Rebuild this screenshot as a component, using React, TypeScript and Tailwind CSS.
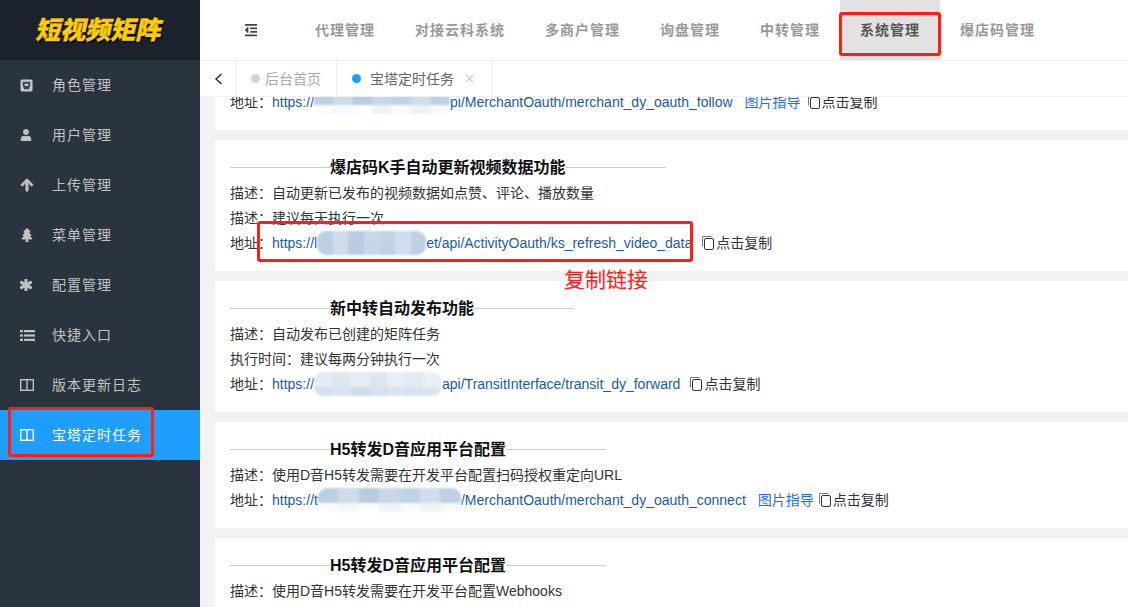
import { FaUser, FaArrowUp, FaTree, FaAsterisk, FaOutdent } from "react-icons/fa";
import type { ReactNode } from "react";

function RoleIcon() {
  return (
    <svg viewBox="0 0 14 14" className="h-[13px] w-[13px]">
      <rect x="0.5" y="0.5" width="13" height="13" rx="2" fill="#c8c8c8" />
      <path d="M3 3h8v4l-1.5 4h-5L3 7z" fill="#39424d" />
      <rect x="5" y="5" width="4" height="2.5" fill="#c8c8c8" />
    </svg>
  );
}

function ColumnsIcon() {
  return (
    <svg viewBox="0 0 14 12" className="h-3 w-[14px]" fill="none" stroke="currentColor" strokeWidth="1.4">
      <rect x="0.7" y="0.7" width="12.6" height="10.6" />
      <path d="M7 1v10" />
    </svg>
  );
}

function ListIcon() {
  return (
    <svg viewBox="0 0 15 11" className="h-[11px] w-[15px]" fill="currentColor">
      <rect x="0" y="0" width="3" height="2.2" />
      <rect x="4" y="0" width="11" height="2.2" />
      <rect x="0" y="4.4" width="3" height="2.2" />
      <rect x="4" y="4.4" width="11" height="2.2" />
      <rect x="0" y="8.8" width="3" height="2.2" />
      <rect x="4" y="8.8" width="11" height="2.2" />
    </svg>
  );
}

const menu: { icon: ReactNode; label: string; active?: boolean }[] = [
  { icon: <RoleIcon />, label: "角色管理" },
  { icon: <FaUser size={12} />, label: "用户管理" },
  { icon: <FaArrowUp size={14} stroke="currentColor" strokeWidth={30} />, label: "上传管理" },
  { icon: <FaTree size={14} />, label: "菜单管理" },
  { icon: <FaAsterisk size={12} stroke="currentColor" strokeWidth={50} />, label: "配置管理" },
  { icon: <ListIcon />, label: "快捷入口" },
  { icon: <ColumnsIcon />, label: "版本更新日志" },
  { icon: <ColumnsIcon />, label: "宝塔定时任务", active: true },
];

const navItems = ["代理管理", "对接云科系统", "多商户管理", "询盘管理", "中转管理", "系统管理", "爆店码管理"];

function Sidebar() {
  return (
    <aside className="flex h-full w-[200px] shrink-0 flex-col bg-[#2a343f]">
      <div className="flex h-[60px] items-center justify-center bg-[#1b222b]">
        <span className="-skew-x-12 text-[25px] leading-none font-black text-[#ffcc00] [-webkit-text-stroke:0.4px_#ffcc00] [text-shadow:2px_2px_0_#000]">
          短视频矩阵
        </span>
      </div>
      {menu.map((item) => (
        <div
          key={item.label}
          className={
            item.active
              ? "flex h-[50px] items-center bg-[#1e9fff] pl-5 text-white"
              : "flex h-[50px] items-center pl-5 text-[#c2c2c2]"
          }
        >
          <span className="flex w-8 items-center">{item.icon}</span>
          <span className="text-sm tracking-[1px]">{item.label}</span>
        </div>
      ))}
    </aside>
  );
}

function TopNav() {
  return (
    <div className="flex h-[61px] shrink-0 items-stretch border-b border-[#f0f0f0] bg-white">
      <div className="flex w-[95px] items-center pl-11 text-[#444]">
        <FaOutdent size={14} />
      </div>
      {navItems.map((name) => (
        <div
          key={name}
          className={
            name === "系统管理"
              ? "flex items-center bg-[#e2e2e2] px-5 text-sm font-semibold tracking-[1px] text-[#555]"
              : "flex items-center px-5 text-sm font-semibold tracking-[1px] text-[#999]"
          }
        >
          {name}
        </div>
      ))}
    </div>
  );
}

function TabBar() {
  return (
    <div className="flex h-9 shrink-0 items-stretch border-b border-[#f0f0f0] bg-white text-sm">
      <div className="flex w-[37px] items-center justify-center border-r border-[#f0f0f0]">
        <svg viewBox="0 0 9 12" className="h-3 w-[9px]" fill="none" stroke="#222" strokeWidth="1.4">
          <path d="M7.5 1 2 6l5.5 5" />
        </svg>
      </div>
      <div className="flex w-[100px] items-center gap-[5px] border-r border-[#f0f0f0] pl-[14px] text-[#aaa]">
        <span className="h-[9px] w-[9px] rounded-full bg-[#d2d2d2]" />
        后台首页
      </div>
      <div className="flex w-[155px] items-center border-r border-[#f0f0f0] pl-[15px] text-[#666]">
        <span className="mr-[9px] h-[9px] w-[9px] rounded-full bg-[#1e9fff]" />
        宝塔定时任务
        <svg viewBox="0 0 10 10" className="ml-[11px] h-[9px] w-[9px]" stroke="#c4c4c4" strokeWidth="1.2">
          <path d="M1 1l8 8M9 1l-8 8" />
        </svg>
      </div>
    </div>
  );
}

function CopyIcon() {
  return (
    <svg viewBox="0 0 14 14" className="h-[14px] w-[14px] shrink-0" fill="none" stroke="#333" strokeWidth="1">
      <path d="M0.5 10.5V0.5h9" stroke="#777" />
      <rect x="2.5" y="2.5" width="9" height="11" rx="1.5" />
    </svg>
  );
}

// mosaic smear that hides part of the address
function Smear({ width, top, bottom }: { width: number; top: string[]; bottom: string[] }) {
  return (
    <span className="inline-flex h-6 flex-col overflow-hidden rounded-[9px] blur-[1px]" style={{ width }}>
      <span className="flex h-[15px]">
        {top.map((c, i) => (
          <span key={i} className="flex-1" style={{ backgroundColor: c }} />
        ))}
      </span>
      <span className="flex h-[9px]">
        {bottom.map((c, i) => (
          <span key={i} className="flex-1" style={{ backgroundColor: c }} />
        ))}
      </span>
    </span>
  );
}

function Heading({ children }: { children: ReactNode }) {
  return (
    <div className="flex h-[25px] w-fit items-center text-base font-bold text-[#111]">
      <span className="h-px w-[100px] bg-[#ccc]" />
      {children}
      <span className="h-px w-[100px] bg-[#ccc]" />
    </div>
  );
}

function Row({ children }: { children: ReactNode }) {
  return <div className="flex h-[25px] items-center text-sm whitespace-nowrap text-[#333]">{children}</div>;
}

function AddressRow({
  head,
  smear,
  tail,
  guide,
  gap,
}: {
  head: string;
  smear: ReactNode;
  tail: string;
  guide?: boolean;
  gap: string;
}) {
  return (
    <Row>
      地址：
      <span className="text-[#1a5ba6]">{head}</span>
      {smear}
      <span className="text-[#1a5ba6]">{tail}</span>
      {guide && <span className="ml-3 text-[#1e6fe0]">图片指导</span>}
      <span className={gap}>
        <CopyIcon />
      </span>
      点击复制
    </Row>
  );
}

function Card({ children }: { children: ReactNode }) {
  return <section className="ml-[15px] shrink-0 bg-white px-[15px] pt-[15px] pb-4">{children}</section>;
}

const blueTop = ["#bccfe3", "#cddbea", "#b8cce1", "#c8d7e8", "#c0d2e5", "#d0dded", "#bed0e4"];
const blueBottom = ["#fafbfd", "#f5f8fb", "#fbfcfd", "#eef3f8", "#f8fafc", "#eef3f8", "#f7f9fb"];
const paleTop = ["#e4ebf3", "#dfe8f1", "#e7edf4", "#dde6f0", "#e8eef5", "#e2eaf2", "#ebf0f6"];
const paleBottom = ["#d5e1ed", "#d9e4ef", "#cddcea", "#d5e1ed", "#d9e4ef", "#d6e2ee", "#dde6f0"];

export default function App() {
  return (
    <div className="relative flex h-screen w-full overflow-hidden bg-white [font-family:'Liberation_Sans','Noto_Sans_CJK_SC',sans-serif]">
      <Sidebar />
      <main className="flex min-w-0 flex-1 flex-col">
        <TopNav />
        <TabBar />
        <div className="flex min-h-0 flex-1 flex-col gap-2.5 overflow-hidden bg-[#f2f2f2]">
          {/* card scrolled mostly out of view */}
          <div className="ml-[15px] flex h-[33px] shrink-0 items-end overflow-hidden bg-white pb-4 pl-[15px]">
            <AddressRow
              head="https://"
              smear={<Smear width={136} top={blueTop} bottom={blueBottom} />}
              tail="pi/MerchantOauth/merchant_dy_oauth_follow"
              guide
              gap="ml-[7px]"
            />
          </div>

          <Card>
            <Heading>爆店码K手自动更新视频数据功能</Heading>
            <Row>描述：自动更新已发布的视频数据如点赞、评论、播放数量</Row>
            <Row>描述：建议每天执行一次</Row>
            <AddressRow
              head="https://l"
              smear={<Smear width={109} top={blueTop} bottom={blueTop} />}
              tail="et/api/ActivityOauth/ks_refresh_video_data"
              gap="ml-[10px]"
            />
          </Card>

          <Card>
            <Heading>新中转自动发布功能</Heading>
            <Row>描述：自动发布已创建的矩阵任务</Row>
            <Row>执行时间：建议每两分钟执行一次</Row>
            <AddressRow
              head="https://"
              smear={<Smear width={128} top={paleTop} bottom={paleBottom} />}
              tail="api/TransitInterface/transit_dy_forward"
              gap="ml-[10px]"
            />
          </Card>

          <Card>
            <Heading>H5转发D音应用平台配置</Heading>
            <Row>描述：使用D音H5转发需要在开发平台配置扫码授权重定向URL</Row>
            <AddressRow
              head="https://t"
              smear={<Smear width={143} top={blueTop} bottom={blueBottom} />}
              tail="/MerchantOauth/merchant_dy_oauth_connect"
              guide
              gap="ml-[5px]"
            />
          </Card>

          <Card>
            <Heading>H5转发D音应用平台配置</Heading>
            <Row>描述：使用D音H5转发需要在开发平台配置Webhooks</Row>
          </Card>
        </div>
      </main>

      {/* red markup drawn over the screenshot */}
      <div className="absolute top-[407px] left-2 h-[50px] w-[146px] rounded-[3px] border-[3px] border-[#ff2015]" />
      <div className="absolute top-3 left-[839px] h-11 w-[102px] rounded-[3px] border-[3px] border-[#ff2015]" />
      <div className="absolute top-[221px] left-[257px] h-[41px] w-[436px] rounded-[3px] border-[3px] border-[#ff2015]" />
      <div className="absolute top-[265px] left-[564px] text-[21px] leading-[30px] text-[#ff2015]">复制链接</div>
    </div>
  );
}
